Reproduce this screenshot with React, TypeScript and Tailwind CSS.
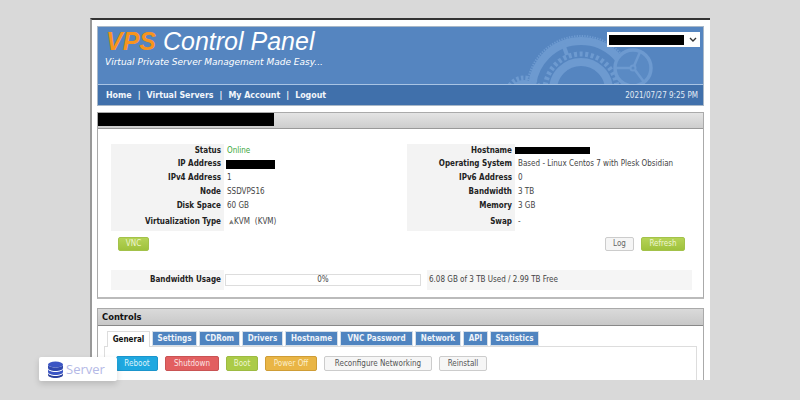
import React from 'react'

const font = { fontFamily: '"DejaVu Sans Condensed", "DejaVu Sans", sans-serif' }

const Redacted = ({ className }: { className: string }) => <div className={`bg-black ${className}`} />

const Row = ({ label, height, children }: { label: string; height: string; children: React.ReactNode }) => (
  <div className={`flex items-center ${height}`}>
    <div className="h-full flex items-center justify-end font-bold text-[#222] bg-[#f3f3f3] pr-[3px] shrink-0 w-[var(--label)]">{label}</div>
    <div className="pl-[3px] text-[#444] flex items-center whitespace-nowrap">{children}</div>
  </div>
)

const Gears = () => (
  <svg className="absolute left-[402px] top-0" width="160" height="58" viewBox="0 0 160 58" fill="none" stroke="#6d9ad0">
    <circle cx="81" cy="63" r="54" strokeWidth="2" strokeDasharray="1.4 1.2" />
    <circle cx="81" cy="63" r="49" strokeWidth="8" />
    <circle cx="81" cy="63" r="36" strokeWidth="5" strokeDasharray="3 2.6" />
    <circle cx="81" cy="63" r="28" strokeWidth="8" />
    <path d="M62 14l5 14" strokeWidth="4" />
    <circle cx="24" cy="68" r="17" strokeWidth="5" strokeDasharray="2.5 2" />
    <circle cx="24" cy="68" r="12" strokeWidth="6" />
    <circle cx="133" cy="41" r="18" fill="#5a8ac4" strokeWidth="3.5" />
    <circle cx="133" cy="41" r="2.5" strokeWidth="2" />
    <path d="M134 39L140 25M131 41H116M135 43L144 55" strokeWidth="2.5" />
  </svg>
)

const tabs = [
  { name: 'Settings', w: 'w-[45px]' },
  { name: 'CDRom', w: 'w-[41px]' },
  { name: 'Drivers', w: 'w-[41px]' },
  { name: 'Hostname', w: 'w-[53px]' },
  { name: 'VNC Password', w: 'w-[73px]' },
  { name: 'Network', w: 'w-[46px]' },
  { name: 'API', w: 'w-[25px]' },
  { name: 'Statistics', w: 'w-[49px]' },
]

const greenBtn = 'h-[14px] rounded-[2px] bg-gradient-to-b from-[#b5d356] to-[#9fc23c] border border-[#a3c24a] text-[#eef5d0] flex items-center justify-center'
const actionBtn = 'h-[15px] rounded-[2px] border flex items-center justify-center'

export default function App() {
  return (
    <div className="w-[800px] h-[400px] bg-[#d9d9d9] overflow-hidden relative pt-[18px] pl-[90px] text-[8px] leading-none" style={font}>
      <div className="w-[620px] h-[362px] bg-white border-t-2 border-t-[#333] border-l-2 border-l-[#999] pl-[5px] pr-[6px] pt-[6px] overflow-hidden">
        {/* Header */}
        <div className="w-[607px] border border-[#a9b8c8]">
          <div className="relative h-[58px] bg-[#5585c0] pl-[8px] pt-[1px] border-b border-b-[#a9c4e4] overflow-hidden">
            <Gears />
            <div className="text-[25px] leading-[26px] italic whitespace-nowrap text-white" style={{ fontFamily: '"Liberation Sans", sans-serif' }}>
              <span className="font-bold text-[#f7941d]">VPS</span> Control Panel
            </div>
            <div className="text-[9px] italic text-white mt-[4px] -ml-[1px] whitespace-nowrap" style={{ fontFamily: '"DejaVu Sans", sans-serif' }}>Virtual Private Server Management Made Easy...</div>
            <div className="absolute right-[3px] top-[5px] w-[93px] h-[15px] bg-white flex items-center pl-[2px]">
              <Redacted className="w-[75px] h-[10px]" />
              <svg className="ml-[5px]" width="8" height="6" viewBox="0 0 8 6" fill="none" stroke="#333" strokeWidth="1.4"><path d="M1 1l3 3 3-3" /></svg>
            </div>
          </div>
          <div className="h-[20px] bg-[#4070ab] flex items-center justify-between pl-[8px] pr-[5px] text-white pt-[1px]">
            <div className="flex items-center gap-[6px] font-bold text-[8.8px] text-[#f2f6fb]">
              <span>Home</span><span>|</span><span>Virtual Servers</span><span>|</span><span>My Account</span><span>|</span><span>Logout</span>
            </div>
            <div className="text-[#e3ebf5]">2021/07/27 9:25 PM</div>
          </div>
        </div>

        {/* Server details */}
        <div className="w-[607px] h-[187px] mt-[6px] border border-[#aaa] border-b-2 border-b-[#bbb]">
          <div className="h-[16px] bg-gradient-to-b from-[#e4e4e4] to-[#cdcdcd] border-b border-b-[#999]">
            <Redacted className="w-[176px] h-[13px]" />
          </div>
          <div className="pl-[13px] pr-[12px] pt-[15px]">
            <div className="flex">
              <div className="w-[296px] [--label:113px]">
                <Row label="Status" height="h-[13px]"><span className="text-[#3aa63a]">Online</span></Row>
                <Row label="IP Address" height="h-[14px]"><Redacted className="w-[49px] h-[9px] -ml-[1px]" /></Row>
                <Row label="IPv4 Address" height="h-[13px]">1</Row>
                <Row label="Node" height="h-[15px]">SSDVPS16</Row>
                <Row label="Disk Space" height="h-[14px]">60 GB</Row>
                <Row label="Virtualization Type" height="h-[18px]"><span className="ml-[2px]">⩓KVM</span><span className="ml-[5px]">(KVM)</span></Row>
              </div>
              <div className="[--label:108px]">
                <Row label="Hostname" height="h-[13px]"><Redacted className="w-[75px] h-[7px] -ml-[3px]" /></Row>
                <Row label="Operating System" height="h-[14px]">Based - Linux Centos 7 with Plesk Obsidian</Row>
                <Row label="IPv6 Address" height="h-[13px]">0</Row>
                <Row label="Bandwidth" height="h-[15px]">3 TB</Row>
                <Row label="Memory" height="h-[14px]">3 GB</Row>
                <Row label="Swap" height="h-[18px]">-</Row>
              </div>
            </div>
            <div className="flex justify-between mt-[6px] pl-[7px] pr-[6px]">
              <div className={`${greenBtn} w-[31px]`}>VNC</div>
              <div className="flex gap-[7px]">
                <div className="w-[29px] h-[14px] rounded-[2px] border border-[#ccc] bg-[#f5f5f5] text-[#666] flex items-center justify-center">Log</div>
                <div className={`${greenBtn} w-[44px]`}>Refresh</div>
              </div>
            </div>
            <div className="flex mt-[19px] h-[20px] w-[581px] items-center">
              <div className="w-[113px] h-full flex items-center justify-end bg-[#f5f5f5] pr-[3px] font-bold text-[#222]">Bandwidth Usage</div>
              <div className="ml-[1px] w-[196px] h-[12px] bg-white border border-[#ddd] flex items-center justify-center text-[#444]">0%</div>
              <div className="ml-[6px] h-full flex-1 flex items-center pl-[2px] bg-[#f5f5f5] text-[#444]">6.08 GB of 3 TB Used / 2.99 TB Free</div>
            </div>
          </div>
        </div>

        {/* Controls */}
        <div className="w-[607px] h-[90px] mt-[9px] border border-[#aaa]">
          <div className="h-[17px] bg-gradient-to-b from-[#dadada] to-[#c8c8c8] border-b border-b-[#888] pl-[4px] flex items-center font-bold text-[9.3px] text-[#111]">Controls</div>
          <div className="pl-[6px] pr-[6px]">
            <div className="flex gap-[2px] pl-[3px] mt-[5px] h-[16px] font-bold">
              <div className="w-[43px] bg-white border border-[#ddd] border-b-0 flex items-center justify-center text-[#111] relative z-10 h-[16px]">General</div>
              {tabs.map(tab => (
                <div key={tab.name} className={`${tab.w} h-[15px] bg-[#4f84c0] border border-[#d5dfe9] text-[#eef3f9] flex items-center justify-center`}>{tab.name}</div>
              ))}
            </div>
            <div className="w-[593px] -mt-[1px] h-[40px] border border-[#ddd] pl-[11px] pt-[9px] flex gap-[7px] items-start text-[8px]">
              <div className={`${actionBtn} w-[42px] bg-[#1fa8e0] border-[#1b95cc] text-[#dff3fb]`}>Reboot</div>
              <div className={`${actionBtn} w-[54px] bg-[#e25f60] border-[#c95354] text-[#fbe3e3]`}>Shutdown</div>
              <div className={`${actionBtn} w-[32px] bg-[#abcb47] border-[#9dbb42] text-[#eef5d0]`}>Boot</div>
              <div className={`${actionBtn} w-[52px] bg-[#e9b545] border-[#cf9d36] text-[#fbeecb]`}>Power Off</div>
              <div className={`${actionBtn} w-[108px] bg-[#f6f6f6] border-[#ccc] text-[#555]`}>Reconfigure Networking</div>
              <div className={`${actionBtn} w-[48px] bg-[#f6f6f6] border-[#ccc] text-[#555]`}>Reinstall</div>
            </div>
          </div>
        </div>
      </div>

      {/* Server badge */}
      <div className="absolute left-[39px] top-[357px] w-[78px] h-[24px] bg-white rounded-[2px] shadow-[0_3px_6px_rgba(0,0,0,0.15)] flex items-center pl-[8px] gap-[2px]">
        <svg width="17" height="17" viewBox="0 0 17 17">
          <ellipse cx="8.5" cy="3.5" rx="7.5" ry="3" fill="#3b55c4" />
          <path d="M1 3.5v3.5c0 1.6 3.4 3 7.5 3s7.5-1.4 7.5-3V3.5c0 1.6-3.4 3-7.5 3S1 5.100 1 3.500z" fill="#3048ad" />
          <path d="M1 8v3c0 1.600 3.400 3 7.500 3s7.500-1.400 7.500-3V8c0 1.600-3.400 3-7.500 3S1 9.600 1 8z" fill="#3b55c4" />
          <path d="M1 12v2c0 1.600 3.400 3 7.500 3s7.500-1.400 7.500-3v-2c0 1.600-3.400 3-7.500 3S1 13.600 1 12z" fill="#2a3f9c" />
        </svg>
        <span className="text-[13px] text-[#b4b9e6]" style={{ fontFamily: '"Open Sans", sans-serif' }}>Server</span>
      </div>
    </div>
  )
}
